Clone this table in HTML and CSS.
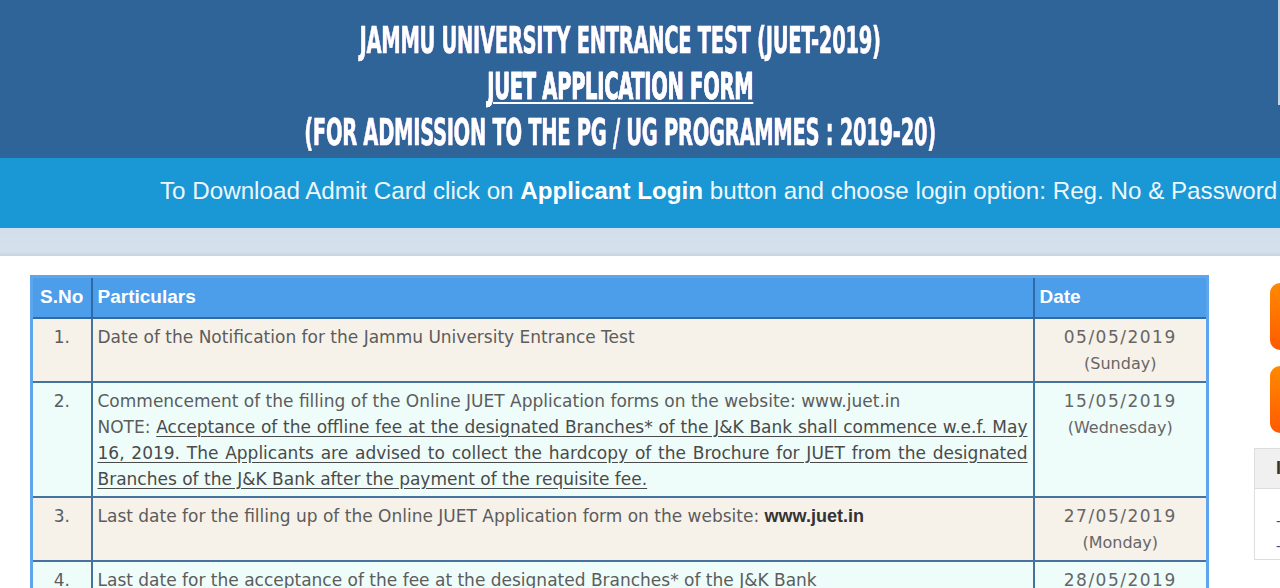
FILE: index.html
```html
<!DOCTYPE html>
<html lang="en">
<head>
<meta charset="utf-8">
<title>JUET-2019 Application Form</title>
<link rel="stylesheet" href="styles.css">
</head>
<body>
<header class="top">
  <div class="top-inner">
    <h1 class="tline"><span class="sq">JAMMU UNIVERSITY ENTRANCE TEST (JUET-2019)</span></h1>
    <h2 class="tline"><span class="sq ul">JUET APPLICATION FORM</span></h2>
    <h2 class="tline"><span class="sq">(FOR ADMISSION TO THE PG / UG PROGRAMMES : 2019-20)</span></h2>
  </div>
  <div class="edge-box"></div>
</header>
<div class="notice">To Download Admit Card click on <b>Applicant Login</b> button and choose login option: Reg. No &amp; Password</div>
<div class="strip"></div>
<main class="content">
  <table class="sched">
    <colgroup><col class="c1"><col class="c2"><col class="c3"></colgroup>
    <thead>
      <tr><th class="sno">S.No</th><th>Particulars</th><th>Date</th></tr>
    </thead>
    <tbody>
      <tr class="odd">
        <td class="num">1.</td>
        <td>Date of the Notification for the Jammu University Entrance Test</td>
        <td class="date">05/05/2019<br><span class="day">(Sunday)</span></td>
      </tr>
      <tr class="even">
        <td class="num">2.</td>
        <td class="just">Commencement of the filling of the Online JUET Application forms on the website: www.juet.in
          <span class="jl">NOTE: <u>Acceptance of the offline fee at the designated Branches* of the J&amp;K Bank shall commence w.e.f. May</u></span>
          <span class="jl"><u>16, 2019. The Applicants are advised to collect the hardcopy of the Brochure for JUET from the designated</u></span>
          <span class="jn"><u>Branches of the J&amp;K Bank after the payment of the requisite fee.</u></span>
        </td>
        <td class="date">15/05/2019<br><span class="day">(Wednesday)</span></td>
      </tr>
      <tr class="odd">
        <td class="num">3.</td>
        <td>Last date for the filling up of the Online JUET Application form on the website: <b>www.juet.in</b></td>
        <td class="date">27/05/2019<br><span class="day">(Monday)</span></td>
      </tr>
      <tr class="even">
        <td class="num">4.</td>
        <td>Last date for the acceptance of the fee at the designated Branches* of the J&amp;K Bank</td>
        <td class="date">28/05/2019<br><span class="day">(Tuesday)</span></td>
      </tr>
    </tbody>
  </table>
  <aside class="side">
    <a class="obtn" href="#">Applicant Login</a>
    <a class="obtn" href="#">New Registration</a>
    <div class="panel">
      <div class="panel-h">Important Links</div>
      <ul class="panel-b">
        <li>- Information Brochure</li>
        <li>- Syllabus</li>
      </ul>
    </div>
  </aside>
</main>
</body>
</html>
```
FILE: styles.css
```css
html, body {
  margin: 0;
  padding: 0;
}
body {
  width: 1280px;
  height: 588px;
  overflow: hidden;
  background: #ffffff;
  font-family: "Liberation Sans", Arial, sans-serif;
}

.top {
  position: relative;
  background: #2f6498;
  height: 158px;
  box-sizing: border-box;
  padding: 17px 40px 0 0;
}
.top-inner {
  display: flex;
  flex-direction: column;
  align-items: center;
}
.tline {
  margin: 0;
  height: 46px;
  line-height: 46px;
  display: flex;
  justify-content: center;
  font-family: "DejaVu Sans Condensed", "DejaVu Sans", sans-serif;
  font-weight: bold;
  font-size: 38px;
  color: #ffffff;
  white-space: nowrap;
  -webkit-text-stroke: 0.6px #ffffff;
  text-shadow: 1px 0 1px rgba(210, 80, 230, 0.45);
}
.sq {
  display: inline-block;
  transform: scaleX(0.57);
  letter-spacing: -0.5px;
}
.ul {
  text-decoration: underline;
  text-decoration-thickness: 2px;
  text-underline-offset: 3px;
}
.edge-box {
  position: absolute;
  right: 0;
  top: 0;
  width: 2px;
  height: 105px;
  background: #c9d6e6;
}

.notice {
  background: #1a97d5;
  height: 70px;
  line-height: 66px;
  padding-left: 160px;
  color: #eef7fc;
  font-family: "Liberation Sans", Arial, sans-serif;
  font-size: 24.2px;
  white-space: nowrap;
  overflow: hidden;
}
.notice b {
  color: #ffffff;
}

.strip {
  height: 28px;
  background: linear-gradient(#d2deeb, #d6e1ed 85%, #c6d2df);
}

.content {
  display: flex;
  align-items: flex-start;
  padding: 19px 0 0 30px;
}

.sched {
  flex: none;
  width: 1179px;
  border-collapse: collapse;
  border: 3px solid #5da6ee;
  font-family: "DejaVu Sans", sans-serif;
  font-size: 17px;
  color: #5c5c5c;
}
.c1 { width: 60px; }
.c3 { width: 174px; }

.sched th {
  background: #4d9eea;
  color: #ffffff;
  font-family: "Liberation Sans", Arial, sans-serif;
  font-size: 19px;
  font-weight: bold;
  text-align: left;
  height: 41px;
  box-sizing: border-box;
  padding: 0 5px;
  border: 2px solid #2f6aa6;
  border-top-color: #5da6ee;
}
.sched th.sno {
  padding: 0 2px;
  text-align: center;
}
.sched td {
  vertical-align: top;
  line-height: 26px;
  padding: 5px 5px 4px;
  border: 2px solid #46729f;
}
.sched td.num {
  text-align: center;
  padding-left: 2px;
  padding-right: 2px;
}
.sched td.date {
  text-align: center;
  letter-spacing: 1.5px;
  color: #666666;
}
.day {
  letter-spacing: 0;
  font-size: 16px;
}
.sched b {
  color: #333333;
  font-weight: bold;
  font-family: "Liberation Sans", Arial, sans-serif;
  font-size: 18px;
}
.odd td { background: #f6f1e9; }
.even td { background: #eefcfa; }

.just { text-align: left; }
.jl {
  display: block;
  text-align: justify;
  text-align-last: justify;
}
.jn {
  display: block;
}
.just u {
  color: #4a4a4a;
  text-underline-offset: 3px;
}

.side {
  flex: none;
  width: 300px;
  margin-left: 45px;
  padding-top: 8px;
  display: flex;
  flex-direction: column;
}
.obtn {
  display: block;
  margin-left: 16px;
  height: 67px;
  margin-bottom: 16px;
  border-radius: 10px;
  background: linear-gradient(#ff8a00, #ff5a00);
  color: #ffffff;
  font-weight: bold;
  font-size: 18px;
  line-height: 67px;
  padding-left: 60px;
  text-decoration: none;
}
.panel {
  margin-top: -1px;
  border: 1px solid #dddddd;
  background: #ffffff;
}
.panel-h {
  height: 39px;
  line-height: 39px;
  background: #f0f0f0;
  border-bottom: 1px solid #dddddd;
  padding-left: 21px;
  font-size: 18px;
  font-weight: bold;
  color: #333333;
}
.panel-b {
  list-style: none;
  margin: 0;
  padding: 20px 0 0 21px;
  color: #2b4fa0;
  font-size: 14px;
  line-height: 25px;
}
```
